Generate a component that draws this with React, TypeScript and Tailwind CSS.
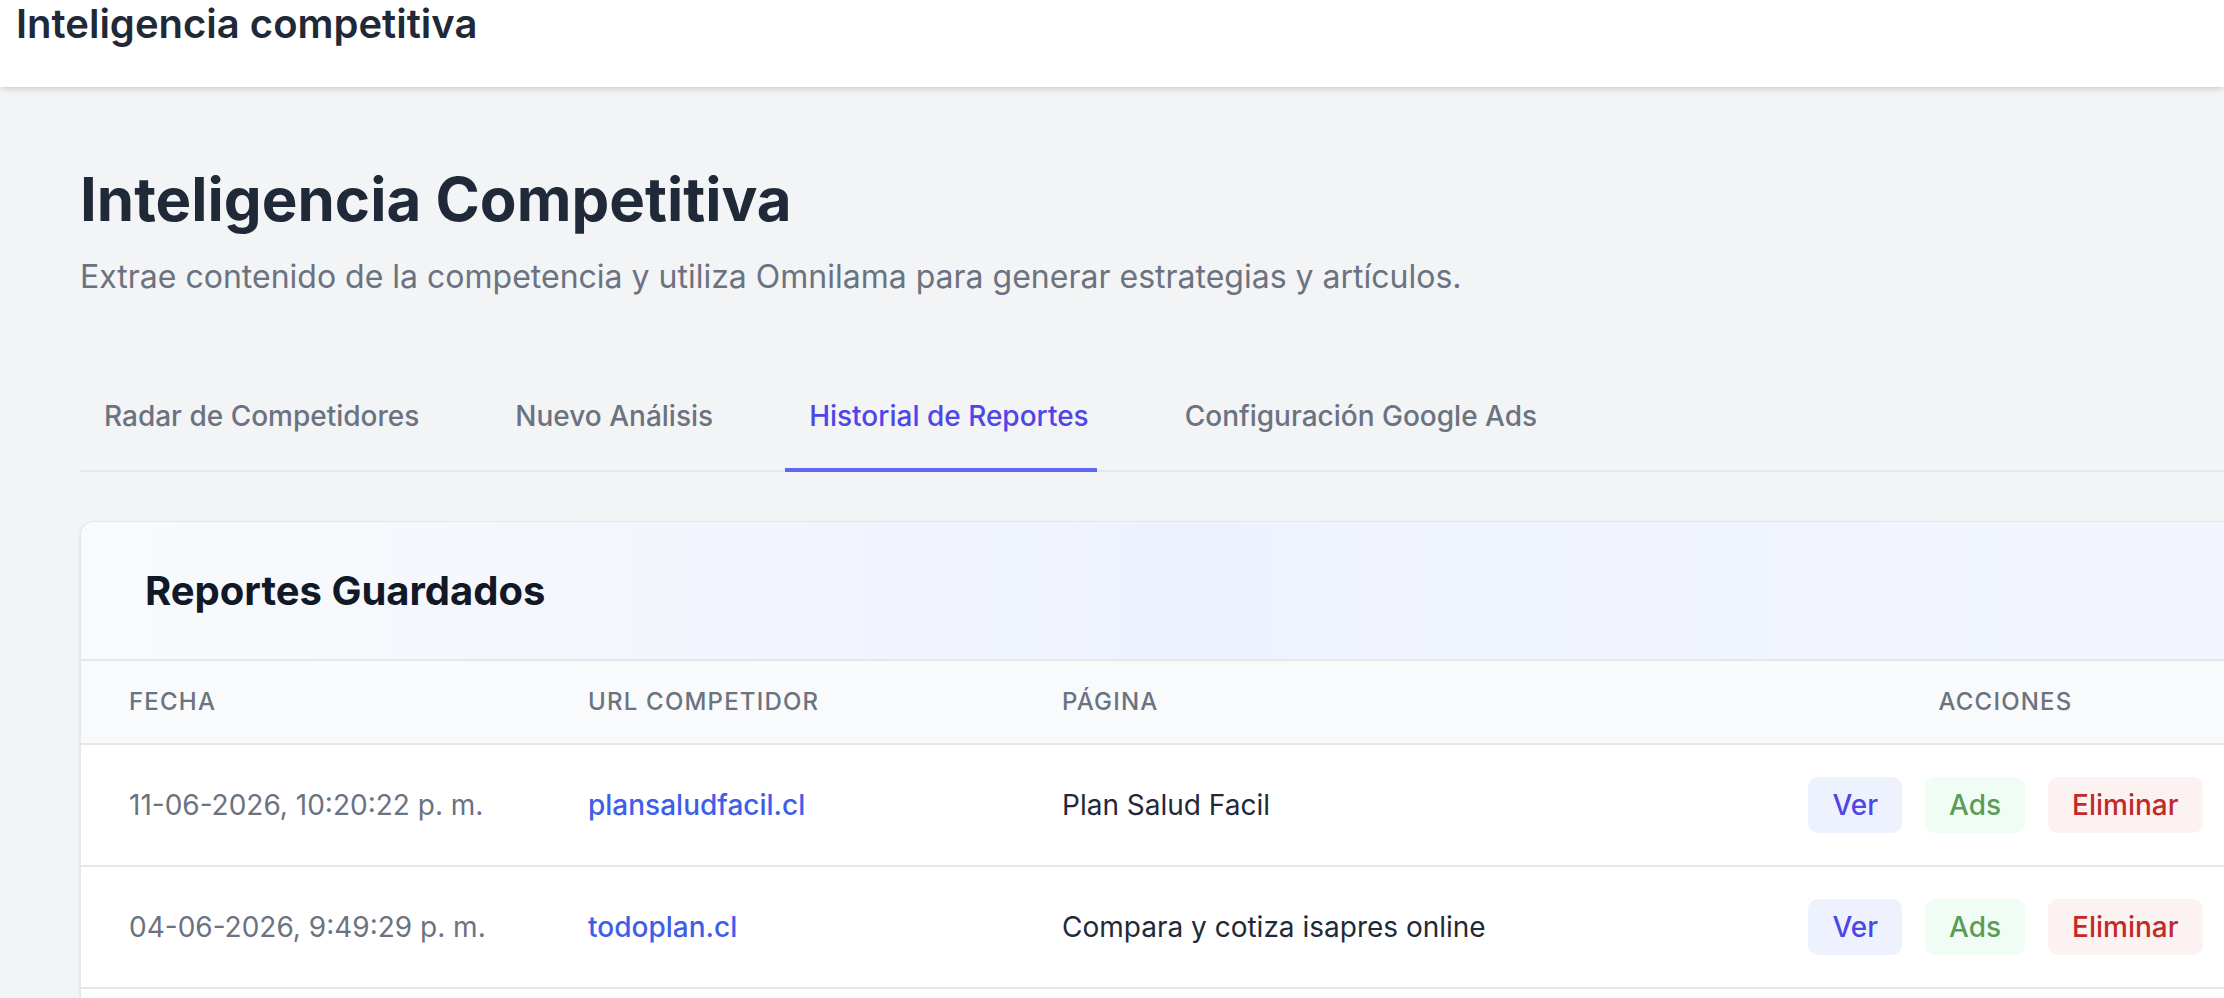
import React, { useState } from 'react';

type Report = {
  fecha: string;
  url: string;
  pagina: string;
};

const reports: Report[] = [
  { fecha: '11-06-2026, 10:20:22 p. m.', url: 'plansaludfacil.cl', pagina: 'Plan Salud Facil' },
  { fecha: '04-06-2026, 9:49:29 p. m.', url: 'todoplan.cl', pagina: 'Compara y cotiza isapres online' },
  { fecha: '28-05-2026, 6:12:05 p. m.', url: 'isapres.cl', pagina: 'Isapres Chile' },
];

const tabs = ['Radar de Competidores', 'Nuevo Análisis', 'Historial de Reportes', 'Configuración Google Ads'];

const font = { fontFamily: 'Inter, "Noto Sans", sans-serif' };

function ReportRow({ report }: { report: Report }) {
  return (
    <div className="grid h-[122px] grid-cols-[459px_474px_744px_1fr] items-center border-b-2 border-[#e5e7eb] bg-white text-[28px] leading-[42px]">
      <div className="pl-[48px] text-[#6b7280]">{report.fecha}</div>
      <div className="pl-[48px] font-medium text-[#3f5ee8]">{report.url}</div>
      <div className="pl-[48px] text-[#1f2937]">{report.pagina}</div>
      <div className="flex items-center justify-center gap-[23px]">
        <button className="rounded-[10px] bg-[#eef2ff] px-[24px] py-[7px] font-medium text-[#4f46e5]">Ver</button>
        <button className="rounded-[10px] bg-[#f0fdf4] px-[24px] py-[7px] font-medium text-[#5c9c55]">Ads</button>
        <button className="rounded-[10px] bg-[#fdf2f2] px-[24px] py-[7px] font-medium text-[#c22a2a]">Eliminar</button>
      </div>
    </div>
  );
}

export default function App() {
  const [activeTab, setActiveTab] = useState('Historial de Reportes');

  return (
    <div className="h-screen w-full overflow-hidden bg-[#f3f4f6]" style={font}>
      {/* Top bar */}
      <header className="relative z-10 h-[87px] bg-white pl-[16px] shadow-md">
        <h1 className="text-[40px] font-semibold leading-[48px] text-[#1f2937]">Inteligencia competitiva</h1>
      </header>

      <main className="w-[2254px] pl-[80px] pt-[77px]">
        <h2 className="text-[60px] font-bold leading-[70px] text-[#1f2937]">Inteligencia Competitiva</h2>
        <p className="mt-[18px] text-[32px] leading-[50px] text-[#6b7280]">
          Extrae contenido de la competencia y utiliza Omnilama para generar estrategias y artículos.
        </p>

        {/* Tabs */}
        <nav className="mt-[68px] flex gap-[64px] border-b-2 border-[#e5e7eb]">
          {tabs.map((tab) => {
            const active = tab === activeTab;
            return (
              <button
                key={tab}
                onClick={() => setActiveTab(tab)}
                className={
                  active
                    ? '-mb-[2px] border-b-4 border-[#6366f1] pb-[31px] pl-[24px] pr-[8px] pt-[25px] text-[28px] font-medium leading-[42px] text-[#4f46e5]'
                    : '-mb-[2px] border-b-4 border-transparent pb-[31px] pl-[24px] pr-[8px] pt-[25px] text-[28px] font-medium leading-[42px] text-[#6b7280]'
                }
              >
                {tab}
              </button>
            );
          })}
        </nav>

        {/* Saved reports card */}
        <section className="mt-[49px] overflow-hidden rounded-[14px] border border-[#e5e7eb] bg-white shadow-sm">
          <div className="border-b-2 border-[#e5e7eb] bg-linear-to-r from-[#f9fafb] via-[#eef2ff] to-[#f3f6fe] px-[64px] pb-[40px] pt-[41px]">
            <h3 className="text-[40px] font-bold leading-[56px] text-[#111827]">Reportes Guardados</h3>
          </div>

          <div className="grid grid-cols-[459px_474px_744px_1fr] border-b-2 border-[#e5e7eb] bg-[#f9fafb] text-[24px] font-medium uppercase leading-[34px] tracking-[0.05em] text-[#6b7280]">
            <div className="py-[24px] pl-[48px]">Fecha</div>
            <div className="py-[24px] pl-[48px]">URL Competidor</div>
            <div className="py-[24px] pl-[48px]">Página</div>
            <div className="py-[24px] text-center">Acciones</div>
          </div>

          {reports.map((r) => (
            <ReportRow key={r.url} report={r} />
          ))}
        </section>
      </main>
    </div>
  );
}
